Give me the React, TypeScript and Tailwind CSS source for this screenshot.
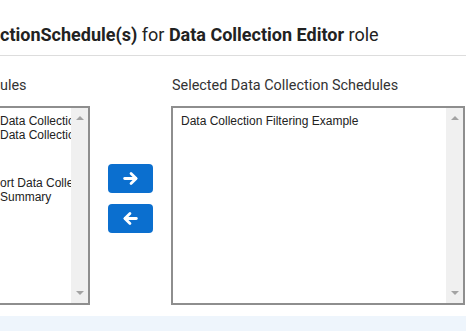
import React from "react";

function ScrollBar() {
  return (
    <div className="w-[17px] shrink-0 bg-[#f0f0f0] flex flex-col items-center justify-between pt-[8px] pb-[8px]">
      <div className="w-0 h-0 border-l-[4px] border-r-[4px] border-b-[4px] border-l-transparent border-r-transparent border-b-[#a3a3a3]" />
      <div className="w-0 h-0 border-l-[4px] border-r-[4px] border-t-[4px] border-l-transparent border-r-transparent border-t-[#a3a3a3]" />
    </div>
  );
}

function Arrow({ dir }: { dir: "right" | "left" }) {
  return (
    <svg width="17" height="17" viewBox="0 0 16 16" fill="none" stroke="white" strokeWidth="2.6" strokeLinecap="round" strokeLinejoin="round">
      {dir === "right" ? (
        <>
          <path d="M2.5 8h10.5" />
          <path d="M8.5 3.2L13.3 8L8.5 12.8" />
        </>
      ) : (
        <>
          <path d="M13.5 8H3" />
          <path d="M7.5 3.2L2.7 8L7.5 12.8" />
        </>
      )}
    </svg>
  );
}

export default function App() {
  const item = "whitespace-nowrap text-[12px] leading-[14px] text-[#222]";
  return (
    <div className="w-[474px] h-[331px] overflow-hidden bg-white" style={{ fontFamily: "Roboto, 'Liberation Sans', sans-serif" }}>
      <div className="w-[466px]">
        <div className="pt-[24px] pb-[9px] border-b border-[#dddddd] text-[18px] leading-[22px] text-[#222] whitespace-nowrap">
          <span className="font-bold">ctionSchedule(s)</span> for <span className="font-bold">Data Collection Editor</span> role
        </div>
      </div>
      <div className="flex mt-[20px]">
        <div className="w-[90px] shrink-0 flex flex-col">
          <div className="h-[20px] leading-[20px] text-[14.4px] text-[#333] whitespace-nowrap">ules</div>
          <div className="mt-[10px] h-[199px] flex border-t-2 border-b-2 border-r-2 border-[#8e8e8e] bg-white">
            <div className="flex-1 overflow-hidden pt-[6px]" style={{ fontFamily: "'Liberation Sans', Arial, sans-serif" }}>
              <div className={item}>Data Collectio</div>
              <div className={item}>Data Collectio</div>
              <div className={item + " mt-[34px]"}>ort Data Colle</div>
              <div className={item}>Summary</div>
            </div>
            <ScrollBar />
          </div>
        </div>
        <div className="ml-[18px] w-[45px] shrink-0 flex flex-col gap-[11px] pt-[88px]">
          <button className="h-[29px] w-[45px] rounded-[4px] bg-[#0b6fcf] flex items-center justify-center">
            <Arrow dir="right" />
          </button>
          <button className="h-[29px] w-[45px] rounded-[4px] bg-[#0b6fcf] flex items-center justify-center">
            <Arrow dir="left" />
          </button>
        </div>
        <div className="ml-[18px] w-[294px] shrink-0 flex flex-col">
          <div className="h-[20px] leading-[20px] text-[14.4px] text-[#333] whitespace-nowrap pl-[1px]">Selected Data Collection Schedules</div>
          <div className="mt-[10px] h-[199px] flex border-2 border-[#8e8e8e] bg-white">
            <div className="flex-1 overflow-hidden pt-[6px] pl-[8px]" style={{ fontFamily: "'Liberation Sans', Arial, sans-serif" }}>
              <div className={item}>Data Collection Filtering Example</div>
            </div>
            <ScrollBar />
          </div>
        </div>
      </div>
      <div className="mt-[11px] w-[466px] h-[20px] bg-[#eef5fc]" />
    </div>
  );
}
